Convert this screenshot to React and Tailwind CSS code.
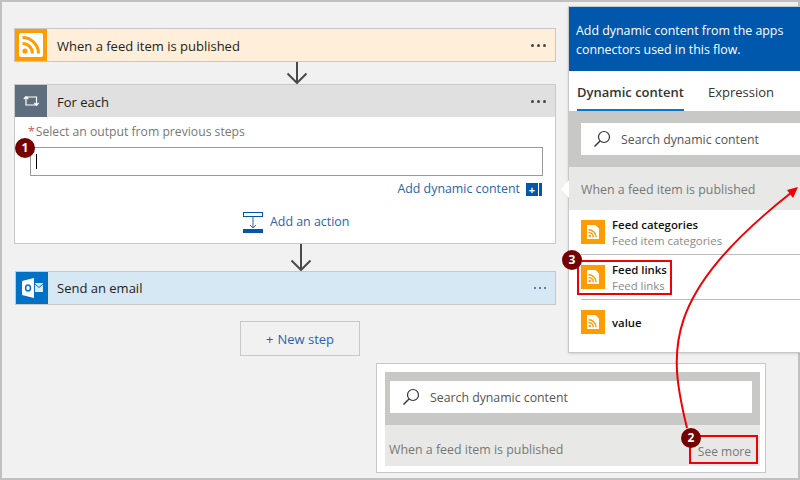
import React from 'react';

const font = { fontFamily: '"Open Sans", sans-serif' };

function RssGlyph({ size = 24 }) {
  return (
    <svg width={size} height={size} viewBox="0 0 24 24">
      <rect x="0" y="0" width="24" height="24" rx="2" fill="#fff" />
      <circle cx="6" cy="18" r="2.6" fill="#ff9c00" />
      <path d="M3.5 10.5a10 10 0 0 1 10 10" fill="none" stroke="#ff9c00" strokeWidth="3" />
      <path d="M3.5 4.5a16 16 0 0 1 16 16" fill="none" stroke="#ff9c00" strokeWidth="3" />
    </svg>
  );
}

function SmallRss() {
  return (
    <svg width="12" height="14" viewBox="0 0 12 14">
      <path d="M0 0h8.5L12 3.5V14H0z" fill="#fff" />
      <circle cx="2.8" cy="11" r="1.2" fill="#ff9c00" />
      <path d="M1.5 7.6a4.5 4.5 0 0 1 4.8 4.6" fill="none" stroke="#ff9c00" strokeWidth="1.4" />
      <path d="M1.5 4.8a7.4 7.4 0 0 1 7.6 7.4" fill="none" stroke="#ff9c00" strokeWidth="1.4" />
    </svg>
  );
}

function Dots({ light }) {
  const dot = light ? 'w-[2px] h-[2px] bg-[#5b7f9e]' : 'w-[3px] h-[3px] rounded-full bg-[#444]';
  return (
    <div className="ml-auto mr-[9px] flex items-center gap-[3px]">
      <span className={dot} />
      <span className={dot} />
      <span className={dot} />
    </div>
  );
}

function DownArrow({ height, offset }) {
  return (
    <div className={offset} style={{ height }}>
      <svg className="block" width="22" height={height} viewBox={`0 0 22 ${height}`}>
        <path d={`M11 0V${height - 1}M1.5 ${height - 10.5}L11 ${height - 1}L20.5 ${height - 10.5}`} fill="none" stroke="#4a4a4a" strokeWidth="2" />
      </svg>
    </div>
  );
}

function Badge({ n, className }) {
  return (
    <div className={`absolute w-5 h-5 rounded-full bg-[#750000] text-white text-[12px] font-bold flex items-center justify-center ${className}`}>
      {n}
    </div>
  );
}

function SearchBox({ className }) {
  return (
    <div className={`bg-white h-8 flex items-center text-[12.3px] text-[#555] ${className}`}>
      <svg className="ml-3 mr-[10px] shrink-0" width="18" height="18" viewBox="0 0 18 18">
        <circle cx="11" cy="7" r="5.5" fill="none" stroke="#333" strokeWidth="1.2" />
        <path d="M7 11L1.5 16.5" stroke="#333" strokeWidth="1.4" />
      </svg>
      <span className="pt-[2px]">Search dynamic content</span>
    </div>
  );
}

function FeedItem({ title, sub, last }) {
  return (
    <div className={`ml-[12px] h-[45px] flex ${last ? '' : 'border-b border-[#bdbdbd]'}`}>
      <div className="w-6 h-6 mt-[10px] bg-[#ff9c00] flex items-center justify-center shrink-0">
        <SmallRss />
      </div>
      <div className={`ml-[7px] ${sub ? 'mt-[7px]' : 'mt-[15px]'}`}>
        <div className="text-[11.4px] leading-[16px] font-semibold text-[#111]">{title}</div>
        {sub && <div className="text-[11.4px] leading-[15px] text-[#8a8a8a]">{sub}</div>}
      </div>
    </div>
  );
}

function Panel() {
  return (
    <div className="absolute left-[568px] top-[6px] w-[232px] h-[347px] bg-white border border-[#c8c8c8] border-r-0 shadow-sm">
      <div className="h-[64px] bg-[#0058ad] text-white text-[12.4px] leading-[19px] pl-[7px] pt-[14px] whitespace-nowrap">
        Add dynamic content from the apps<br />connectors used in this flow.
      </div>
      <div className="h-[40px] flex text-[13px] pl-2 text-[#333]">
        <div className="h-[40px] w-[107px] pt-[12px] font-semibold border-b-2 border-[#0078d4] whitespace-nowrap">Dynamic content</div>
        <div className="ml-6 pt-[12px]">Expression</div>
      </div>
      <div className="h-[56px] bg-[#c8c9c7] pt-3 pl-3">
        <SearchBox />
      </div>
      <div className="h-[43px] bg-[#e8e9e7] flex items-center pl-3 pt-[4px] text-[12.4px] text-[#777]">
        When a feed item is published
      </div>
      <FeedItem title="Feed categories" sub="Feed item categories" />
      <FeedItem title="Feed links" sub="Feed links" />
      <FeedItem title="value" last />
    </div>
  );
}

function Inset() {
  return (
    <div className="absolute left-[376px] top-[363px] w-[390px] h-[110px] bg-white border border-[#c8c8c8] pt-2 pl-2 pr-[5px]">
      <div className="h-[53px] bg-[#c8c9c7] pt-[9px] pl-[5px] pr-[8px]">
        <SearchBox />
      </div>
      <div className="h-[41px] bg-[#e8e9e7] flex items-center pl-[4px] pt-[9px] text-[12.4px] text-[#777]">
        When a feed item is published
        <span className="ml-auto mr-[9px] pt-[4px] text-[12px]">See more</span>
      </div>
    </div>
  );
}

export default function App() {
  return (
    <div className="relative w-[800px] h-[480px] bg-[#f1f1f1] border-[2px] border-[#c0c0c0]" style={font}>
      <div className="w-[542px] ml-[12px] pt-[26px]">
        <div className="h-[34px] bg-[#ffeed9] border border-[#c8c8c8] flex items-center text-[13px] text-[#222]">
          <div className="w-8 h-8 bg-[#ff9c00] flex items-center justify-center shrink-0">
            <RssGlyph />
          </div>
          <span className="ml-[10px] pt-[4px]">When a feed item is published</span>
          <Dots />
        </div>
        <DownArrow height={22} offset="ml-[272px]" />
        <div className="h-[160px] bg-white border border-[#c8c8c8]">
          <div className="h-[32px] bg-[#e0e0e0] flex items-center text-[13px] text-[#222]">
            <div className="w-8 h-8 bg-[#5f6e7e] flex items-center justify-center shrink-0">
              <svg width="16" height="14" viewBox="0 0 16 14" fill="none" stroke="#fff" strokeWidth="1.2">
                <path d="M3 3V11H13.5V3H3M.8 5L3 2.6L5.2 5M11.3 9L13.5 11.4L15.7 9" />
              </svg>
            </div>
            <span className="ml-[10px] pt-[4px]">For each</span>
            <Dots />
          </div>
          <div className="pl-[13px] mt-[7px] text-[12.2px] leading-[16px] text-[#777]">
            <span className="text-[#e05060] mr-px">*</span>Select an output from previous steps
          </div>
          <div className="ml-[15px] mr-[12px] mt-[7px] h-[29px] border border-[#9a9a9a] bg-white flex items-center pl-[5px]">
            <span className="w-px h-[15px] bg-black" />
          </div>
          <div className="flex justify-end items-center mr-[13px] mt-[5px] h-[16px] text-[12.4px] text-[#2a64ac]">
            Add dynamic content
            <span className="ml-[6px] w-[12px] h-[13px] bg-[#0058ad] text-white text-[11px] font-bold leading-[13px] text-center">+</span>
            <span className="ml-px w-[3px] h-[13px] bg-[#0058ad]" />
          </div>
          <div className="flex items-center ml-[228px] mt-[15px] text-[12.4px] text-[#2a64ac]">
            <svg className="mr-[7px]" width="20" height="21" viewBox="0 0 20 21">
              <rect x=".5" y=".5" width="19" height="4" fill="none" stroke="#0058ad" />
              <path d="M10 5V16M7 13L10 16L13 13" fill="none" stroke="#2a64ac" />
              <rect x="0" y="17" width="20" height="4" fill="#0058ad" />
            </svg>
            Add an action
          </div>
        </div>
        <DownArrow height={27} offset="ml-[276px]" />
        <div className="ml-px h-[34px] bg-[#d7e8f5] border border-[#c8c8c8] flex items-center text-[13px] text-[#222]">
          <div className="w-8 h-8 bg-[#0072c6] flex items-center justify-center shrink-0">
            <svg width="21" height="20" viewBox="0 0 21 20">
              <path d="M0 3L12 0V20L0 17z" fill="#fff" />
              <ellipse cx="6" cy="10" rx="2.4" ry="3" fill="none" stroke="#0072c6" strokeWidth="1.5" />
              <path d="M13 5H21V14H13z" fill="#dcecf8" />
              <path d="M13 6L17 9.5L21 6" fill="none" stroke="#0072c6" />
            </svg>
          </div>
          <span className="ml-[9px] pt-[2px]">Send an email</span>
          <Dots light />
        </div>
        <div className="ml-[226px] mt-4 w-[120px] h-[35px] border border-[#c8c8c8] flex items-center justify-center pt-[2px] text-[13px] text-[#2a64ac]">
          <span className="text-[#7a3a90] mr-1">+</span>New step
        </div>
      </div>

      <div className="absolute left-[-2px] top-[-2px] w-[800px] h-[480px]">
        <Panel />
        <svg className="absolute left-0 top-0" width="800" height="480">
          <path d="M561 189L569 180V198z" fill="#fff" />
        </svg>
        <Inset />
        <div className="absolute left-[689px] top-[435px] w-[69px] h-[29px] border-2 border-[#f00000]" />
        <div className="absolute left-[577px] top-[260px] w-[95px] h-[35px] border-2 border-[#f00000]" />
        <svg className="absolute left-0 top-0" width="800" height="480">
          <path d="M687 428C668 350 662 295 792 192" fill="none" stroke="#f00000" strokeWidth="2" />
          <path d="M798 187L787 190L793 198z" fill="#f00000" />
        </svg>
        <Badge n="1" className="left-[15px] top-[138px]" />
        <Badge n="2" className="left-[681px] top-[428px]" />
        <Badge n="3" className="left-[562px] top-[250px]" />
      </div>
    </div>
  );
}
